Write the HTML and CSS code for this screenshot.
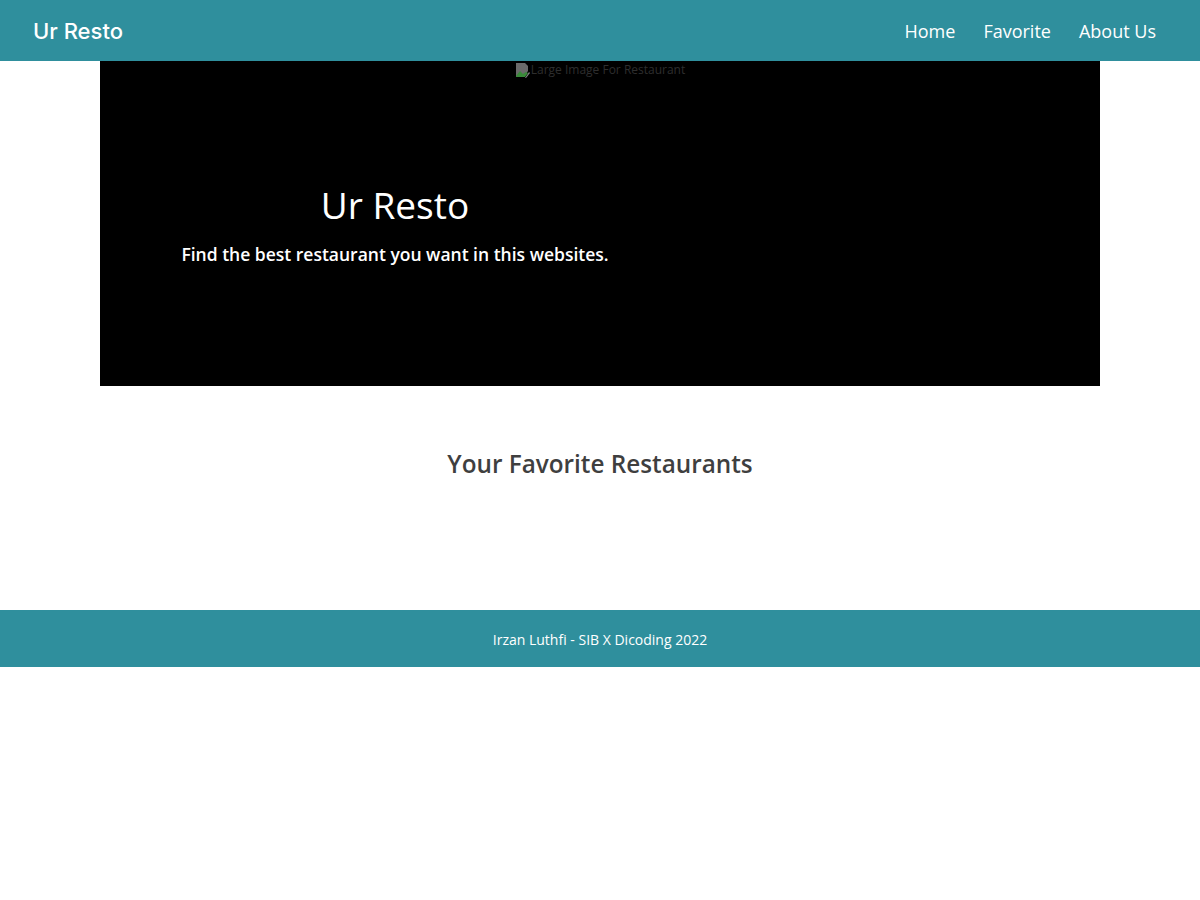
FILE: index.html
```html
<!DOCTYPE html>
<html lang="en">
<head>
<meta charset="utf-8">
<title>Ur Resto</title>
<link rel="stylesheet" href="styles.css">
</head>
<body>
<header class="app-bar">
  <a class="brand" href="#">Ur Resto</a>
  <nav class="nav">
    <a href="#">Home</a>
    <a href="#">Favorite</a>
    <a href="#">About Us</a>
  </nav>
</header>
<main>
  <section class="hero">
    <div class="hero-img">
      <svg class="broken" width="16" height="16" viewBox="0 0 16 16">
        <path d="M1 1h9l3 3v5l-4 6H1z" fill="#6b6b6b"/>
        <path d="M1 14l4-5 3 3 3-2 2 1-3 4H1z" fill="#3a8a3a"/>
        <path d="M14 10l1 1-4 5h-1z" fill="#888"/>
      </svg><span class="alt">Large Image For Restaurant</span>
    </div>
    <div class="hero-text">
      <h1>Ur Resto</h1>
      <p>Find the best restaurant you want in this websites.</p>
    </div>
  </section>
  <section class="content">
    <h2>Your Favorite Restaurants</h2>
    <div class="list"></div>
  </section>
</main>
<footer class="footer">Irzan Luthfi - SIB X Dicoding 2022</footer>
</body>
</html>
```
FILE: styles.css
```css
* { box-sizing: border-box; }
body {
  margin: 0;
  font-family: "Open Sans", "Lato", sans-serif;
  background: #fff;
}
.app-bar {
  height: 61px;
  background: #2f8f9d;
  display: flex;
  align-items: center;
  justify-content: space-between;
  padding: 0 44px 0 33px;
}
.brand {
  font-family: "Inter", sans-serif;
  font-size: 22px;
  font-weight: 500;
  color: #fff;
  text-decoration: none;
}
.nav { display: flex; gap: 28px; }
.nav a {
  color: #fff;
  text-decoration: none;
  font-size: 18px;
  font-weight: 500;
}
.hero {
  position: relative;
  width: 1000px;
  height: 325px;
  margin: 0 auto;
  background: #000;
}
.hero-img {
  display: flex;
  justify-content: center;
  align-items: flex-start;
  padding-top: 1px;
  font-size: 12px;
  color: #2e2e2e;
  line-height: 16px;
}
.broken { flex: none; }
.hero-text {
  position: absolute;
  left: 80px;
  top: 119px;
  width: 430px;
  text-align: center;
  color: #fff;
}
.hero-text h1 {
  margin: 0;
  font-size: 37px;
  font-weight: 500;
  line-height: 50px;
}
.hero-text p {
  margin: 12px 0 0;
  font-size: 17.5px;
  font-weight: 600;
  white-space: nowrap;
}
.content {
  padding: 62px 0 0;
  height: 224px;
  text-align: center;
}
.content h2 {
  margin: 0;
  font-size: 24.3px;
  font-weight: 600;
  color: #3f3f3f;
  line-height: 32px;
}
.footer {
  height: 57px;
  background: #2f8f9d;
  color: #fff;
  display: flex;
  align-items: center;
  justify-content: center;
  font-size: 14px;
  padding-top: 2px;
}
```
